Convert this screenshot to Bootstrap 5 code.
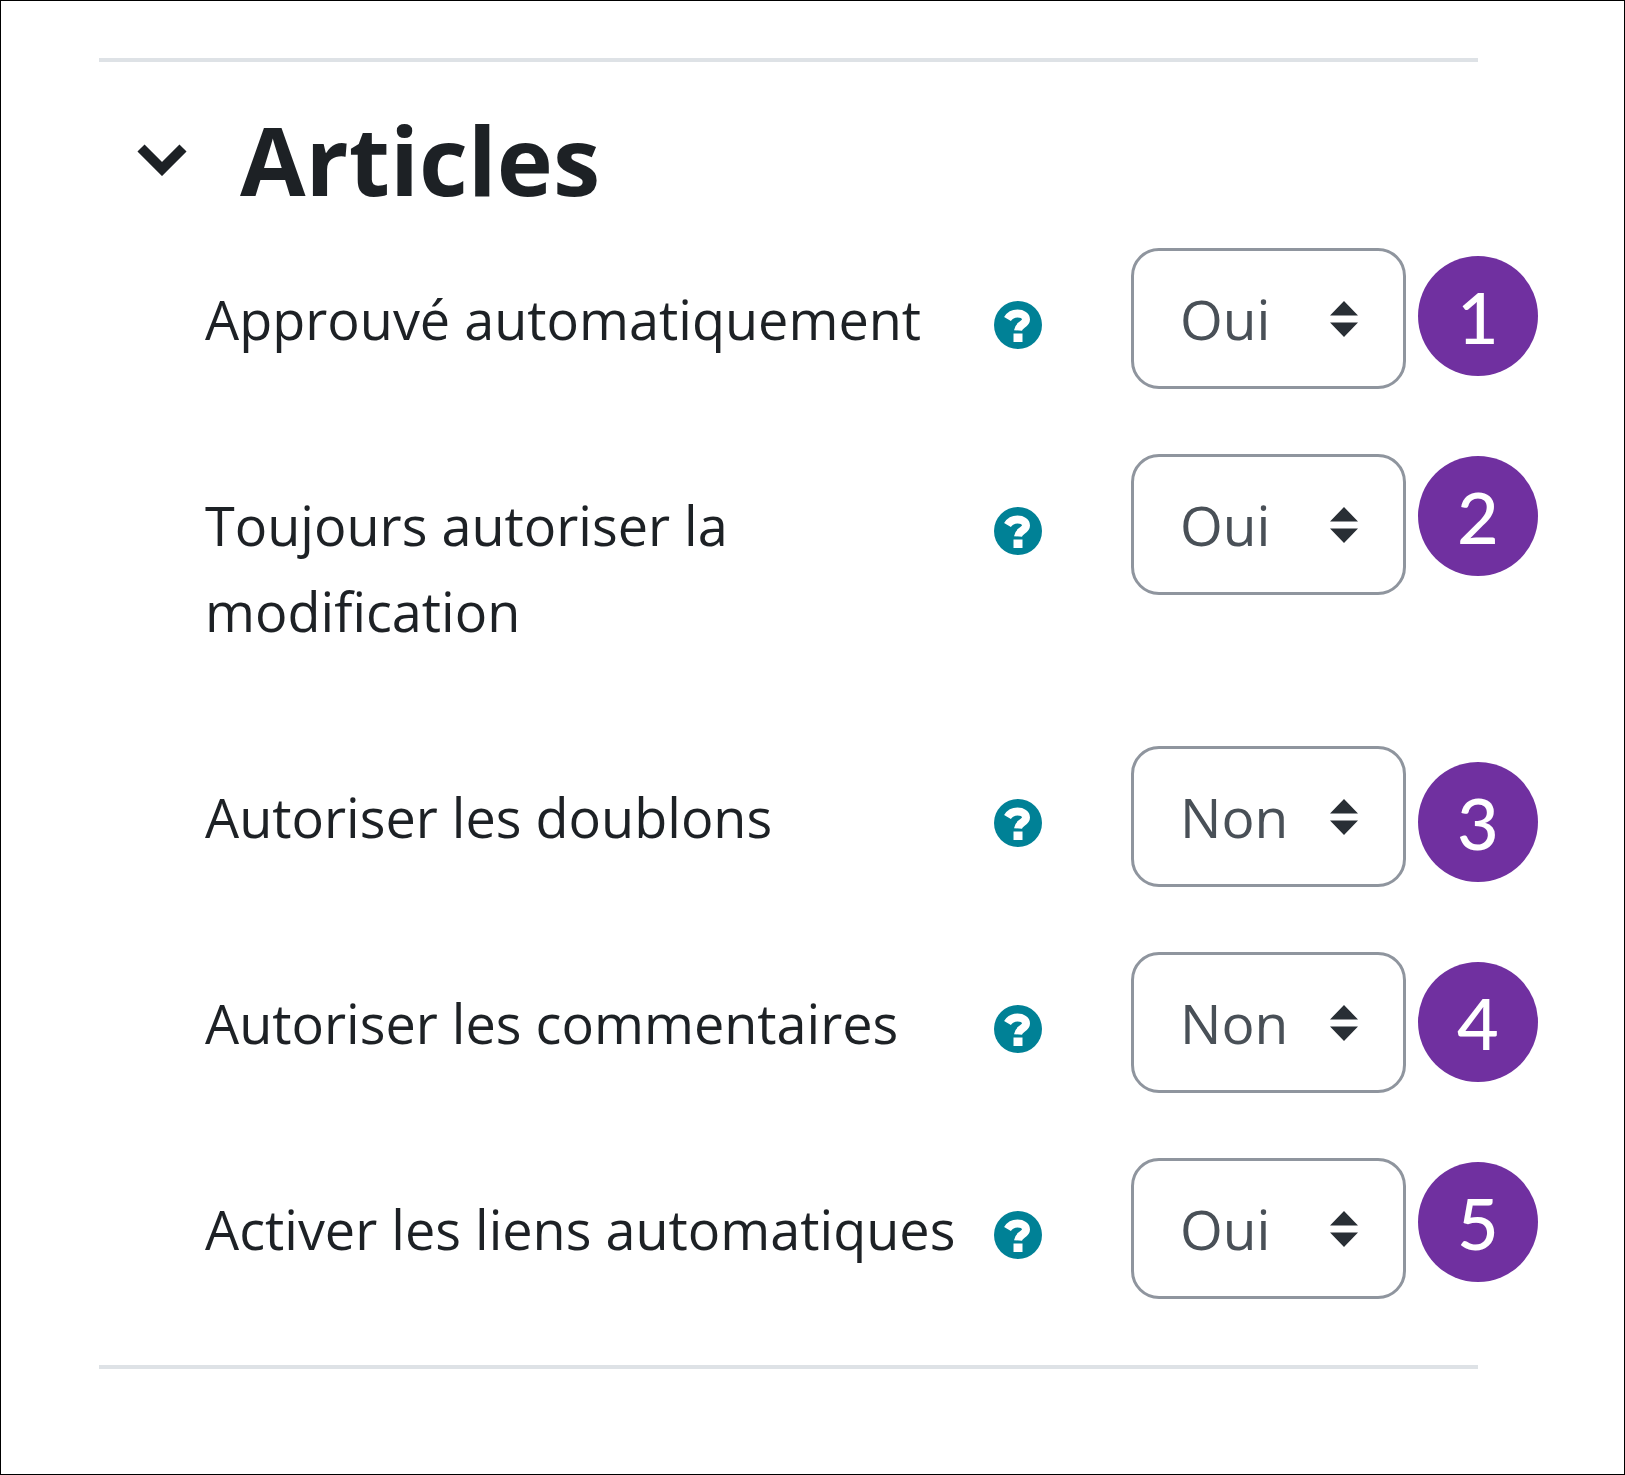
<!DOCTYPE html>
<html lang="fr">
<head>
<meta charset="utf-8">
<meta name="viewport" content="width=device-width, initial-scale=1">
<title>Articles</title>
<link href="https://cdn.jsdelivr.net/npm/bootstrap@5.3.0/dist/css/bootstrap.min.css" rel="stylesheet">
<style>
  body { font-family: "Open Sans", "Noto Sans", sans-serif; font-size: 54px; line-height: 86px; color: #1d2125; background: #fff; }
  .sheet { border: 1px solid #000; padding: 57px 86px 0 98px; }
  .rule { height: 4px; margin: 0 60px 0 0; border: 0; background: #dee2e6; opacity: 1; }
  .section-title { padding: 32px 0 24px 38px; gap: 53px; font-size: 95px; line-height: 130px; font-weight: 700; }
  .toggle-btn { width: 50px; line-height: 0; color: inherit; }
  .fields { gap: 65px; padding-left: 106px; }
  .field-label { padding: 28px 0 27px; }
  .help-btn { width: 48px; height: 48px; margin: 53px 89px 0 0; line-height: 0; }
  .choice { width: 275px; height: 141px; padding: 0 80px 0 46px; border: 3px solid #8f959e; border-radius: 28px; font-size: 55px; line-height: 80px; color: #495057; background-color: #fff; background-size: 28px 36px; background-position: right 45px top 50px;
    background-image: url("data:image/svg+xml,%3Csvg xmlns='http://www.w3.org/2000/svg' viewBox='0 0 28 36'%3E%3Cpath fill='%23292f35' d='M14 0 28 14.500H0zM0 21.500h28L14 36z'/%3E%3C/svg%3E"); }
  .steps { gap: 80px; padding-top: 8px; margin-left: 12px; }
  .step { width: 120px; height: 120px; background: #7030a0; color: #fff; font-family: Lato, sans-serif; font-size: 72px; font-weight: 500; line-height: 120px; }
  .step-apart { margin-top: 106px; }
  .closing { margin-top: 66px; margin-bottom: 105px; }
</style>
</head>
<body>
<svg class="d-none" aria-hidden="true">
  <symbol id="help" viewBox="0 0 48 48">
    <circle cx="24" cy="24" r="24" fill="#008196"/>
    <path fill="none" stroke="#fff" stroke-width="8" d="M13.500 18C16 14 19 12.500 23.500 12.500c5 0 8.500 2.500 8.500 6 0 5-7.500 5-8 11"/>
    <path fill="#fff" d="M19.500 32.500h9v8.500h-9z"/>
  </symbol>
</svg>
<main class="sheet">
  <hr class="rule">
  <h2 class="section-title d-flex align-items-center m-0">
    <button class="toggle-btn btn p-0 border-0" type="button" data-bs-toggle="collapse" data-bs-target="#articles" aria-expanded="true" aria-controls="articles" aria-label="Replier Articles">
      <svg width="50" height="34" viewBox="0 0 50 34" aria-hidden="true"><path fill="none" stroke="currentColor" stroke-width="10" d="M4 6 25 27 46 6"/></svg>
    </button>
    <span>Articles</span>
  </h2>
  <div id="articles" class="collapse show">
    <div class="d-flex align-items-start">
      <form class="fields d-flex flex-column flex-grow-1">
        <div class="d-flex align-items-start">
          <label class="field-label flex-fill" for="approve">Approuvé automatiquement</label>
          <button class="help-btn btn p-0 border-0 flex-shrink-0" type="button" aria-label="Aide"><svg width="48" height="48" aria-hidden="true"><use href="#help"/></svg></button>
          <select class="choice form-select flex-shrink-0" id="approve"><option selected>Oui</option><option>Non</option></select>
        </div>
        <div class="d-flex align-items-start">
          <label class="field-label flex-fill" for="edit">Toujours autoriser la modification</label>
          <button class="help-btn btn p-0 border-0 flex-shrink-0" type="button" aria-label="Aide"><svg width="48" height="48" aria-hidden="true"><use href="#help"/></svg></button>
          <select class="choice form-select flex-shrink-0" id="edit"><option selected>Oui</option><option>Non</option></select>
        </div>
        <div class="d-flex align-items-start">
          <label class="field-label flex-fill" for="duplicates">Autoriser les doublons</label>
          <button class="help-btn btn p-0 border-0 flex-shrink-0" type="button" aria-label="Aide"><svg width="48" height="48" aria-hidden="true"><use href="#help"/></svg></button>
          <select class="choice form-select flex-shrink-0" id="duplicates"><option>Oui</option><option selected>Non</option></select>
        </div>
        <div class="d-flex align-items-start">
          <label class="field-label flex-fill" for="comments">Autoriser les commentaires</label>
          <button class="help-btn btn p-0 border-0 flex-shrink-0" type="button" aria-label="Aide"><svg width="48" height="48" aria-hidden="true"><use href="#help"/></svg></button>
          <select class="choice form-select flex-shrink-0" id="comments"><option>Oui</option><option selected>Non</option></select>
        </div>
        <div class="d-flex align-items-start">
          <label class="field-label flex-fill" for="links">Activer les liens automatiques</label>
          <button class="help-btn btn p-0 border-0 flex-shrink-0" type="button" aria-label="Aide"><svg width="48" height="48" aria-hidden="true"><use href="#help"/></svg></button>
          <select class="choice form-select flex-shrink-0" id="links"><option selected>Oui</option><option>Non</option></select>
        </div>
      </form>
      <div class="steps d-flex flex-column flex-shrink-0 text-center">
        <span class="step rounded-circle">1</span>
        <span class="step rounded-circle">2</span>
        <span class="step step-apart rounded-circle">3</span>
        <span class="step rounded-circle">4</span>
        <span class="step rounded-circle">5</span>
      </div>
    </div>
  </div>
  <hr class="rule closing">
</main>
<script src="https://cdn.jsdelivr.net/npm/bootstrap@5.3.0/dist/js/bootstrap.bundle.min.js"></script>
</body>
</html>
